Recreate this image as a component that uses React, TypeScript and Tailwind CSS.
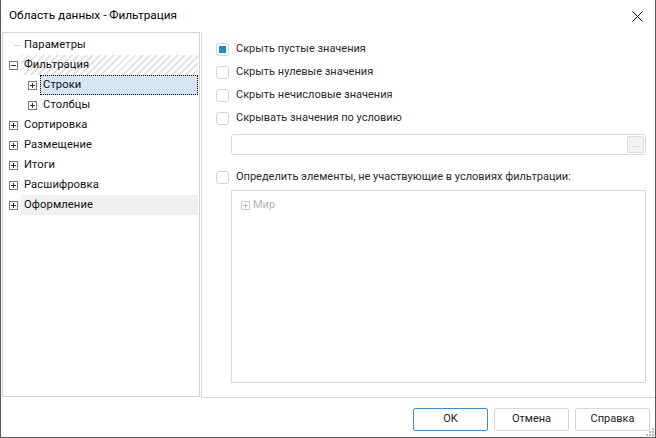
import React from "react";

const font = { fontFamily: 'Roboto, "Noto Sans", sans-serif' };

function PlusBox({ minus = false, light = false }: { minus?: boolean; light?: boolean }) {
  const stroke = light ? "#c8c8c8" : "#7a7a7a";
  const sign = light ? "#c0c0c0" : "#333333";
  return (
    <svg width="9" height="9" viewBox="0 0 9 9" className="shrink-0">
      <rect x="0.5" y="0.5" width="8" height="8" fill="#fff" stroke={stroke} />
      <line x1="2" y1="4.5" x2="7" y2="4.5" stroke={sign} />
      {!minus && <line x1="4.5" y1="2" x2="4.5" y2="7" stroke={sign} />}
    </svg>
  );
}

function TreeRow({
  label,
  level = 0,
  icon = "plus",
  variant,
}: {
  label: string;
  level?: number;
  icon?: "plus" | "minus" | "leaf";
  variant?: "hatched" | "selected" | "hover";
}) {
  const bg =
    variant === "hatched"
      ? "bg-[repeating-linear-gradient(135deg,#e4e4e4_0px,#e4e4e4_2px,#ffffff_2px,#ffffff_5px)]"
      : variant === "selected"
      ? "bg-[#d5e6f6] outline outline-1 outline-dotted outline-black -outline-offset-1"
      : variant === "hover"
      ? "bg-[#f0f0f0]"
      : "";
  return (
    <div className="flex h-[20px] items-center">
      <div className={level === 0 ? "w-[6px]" : "w-[25px]"} />
      <div className="flex w-[12px] items-center">
        {icon === "leaf" ? (
          <div className="ml-[5px] h-px w-[6px] bg-[#cfcfcf]" />
        ) : (
          <PlusBox minus={icon === "minus"} />
        )}
      </div>
      <div className={`mr-[1px] flex h-[20px] flex-1 items-center pl-[3px] ${bg}`}>
        <span className="text-[11.2px] tracking-[0.1px] text-[#111111]">{label}</span>
      </div>
    </div>
  );
}

function Check({ checked = false, label }: { checked?: boolean; label: string }) {
  return (
    <div className="flex h-[23px] items-center">
      <div className="flex h-[13px] w-[13px] items-center justify-center rounded-[3px] border border-[#d4d4d4] bg-white">
        {checked && <div className="h-[7px] w-[7px] bg-[#1e88d4]" />}
      </div>
      <span className="ml-[7px] text-[11px] text-[#2a2a2a]">{label}</span>
    </div>
  );
}

function Btn({ label, primary = false }: { label: string; primary?: boolean }) {
  return (
    <div
      className={`flex h-[23px] w-[75px] items-center justify-center rounded-[2px] border bg-white text-[11px] text-[#222222] ${
        primary ? "border-[#3d8fd1]" : "border-[#d6d6d6]"
      }`}
    >
      {label}
    </div>
  );
}

export default function App() {
  return (
    <div
      style={font}
      className="relative flex h-[438px] w-[656px] flex-col border-x border-b border-[#595959] bg-white"
    >
      {/* title bar */}
      <div className="flex h-[32px] items-center justify-between pl-[8px] pr-[12px]">
        <span className="text-[11.8px] text-black">Область данных - Фильтрация</span>
        <svg width="11" height="11" viewBox="0 0 11 11">
          <path d="M0.5 0.5 L10.5 10.5 M10.5 0.5 L0.5 10.5" stroke="#111" strokeWidth="1" />
        </svg>
      </div>

      {/* content */}
      <div className="flex h-[366px]">
        {/* tree */}
        <div className="ml-px h-[365px] w-[198px] border border-[#d3d3d3] pt-[2px]">
          <TreeRow label="Параметры" icon="leaf" />
          <TreeRow label="Фильтрация" icon="minus" variant="hatched" />
          <TreeRow label="Строки" level={1} variant="selected" />
          <TreeRow label="Столбцы" level={1} />
          <TreeRow label="Сортировка" />
          <TreeRow label="Размещение" />
          <TreeRow label="Итоги" />
          <TreeRow label="Расшифровка" />
          <TreeRow label="Оформление" variant="hover" />
        </div>

        {/* settings */}
        <div className="ml-px flex flex-1 flex-col border-b border-l border-[#d9d9d9] pl-[14px] pt-[6px]">
          <Check checked label="Скрыть пустые значения" />
          <Check label="Скрыть нулевые значения" />
          <Check label="Скрыть нечисловые значения" />
          <Check label="Скрывать значения по условию" />
          <div className="ml-[15px] mr-[9px] mt-[4px] flex h-[21px] items-center justify-end rounded-[3px] border border-[#d9d9d9] pr-[1px]">
            <div className="flex h-[17px] w-[17px] items-end justify-center rounded-[2px] border border-[#dcdcdc] bg-[#f2f2f2] pb-[3px] text-[8px] leading-none text-[#9a9a9a]">
              ...
            </div>
          </div>
          <div className="mt-[11px]">
            <Check label="Определить элементы, не участвующие в условиях фильтрации:" />
          </div>
          <div className="ml-[15px] mr-[9px] mt-[1px] h-[193px] border border-[#d9d9d9] pl-[9px] pt-[6px]">
            <div className="flex items-center">
              <PlusBox light />
              <span className="ml-[3px] text-[11px] text-[#b5b5b5]">Мир</span>
            </div>
          </div>
        </div>
      </div>

      {/* footer */}
      <div className="flex flex-1 items-start justify-end gap-[6px] pr-[5px] pt-[10px]">
        <Btn label="OK" primary />
        <Btn label="Отмена" />
        <Btn label="Справка" />
      </div>

      {/* size grip */}
      <svg className="absolute bottom-[1px] right-[1px]" width="8" height="8" viewBox="0 0 8 8">
        {[
          [6, 0],
          [6, 3],
          [3, 3],
          [6, 6],
          [3, 6],
          [0, 6],
        ].map(([x, y], i) => (
          <rect key={i} x={x} y={y} width="2" height="2" fill="#b8b8b8" />
        ))}
      </svg>
    </div>
  );
}
